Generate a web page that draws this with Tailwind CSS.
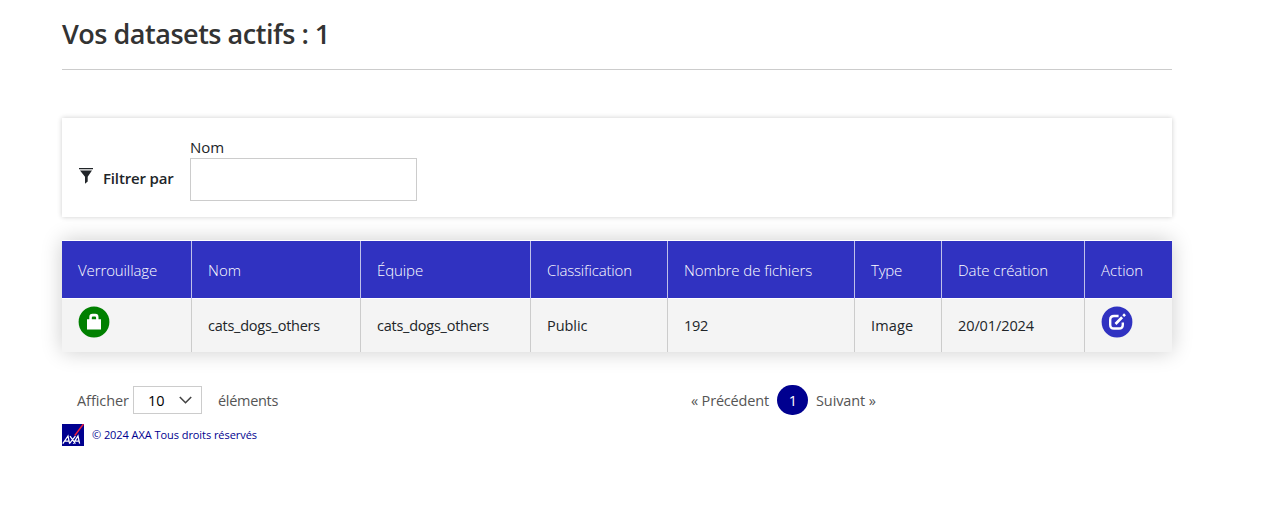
<!DOCTYPE html>
<html lang="fr">
<head>
<meta charset="utf-8">
<title>Vos datasets actifs</title>
<script src="https://cdn.jsdelivr.net/npm/@tailwindcss/browser@4"></script>
</head>
<body class="bg-white font-['Open_Sans',sans-serif] text-[15px] leading-6 text-[#212529]">
<main class="ml-[62px] flex w-[1110px] flex-col whitespace-nowrap">
  <h1 class="h-[70px] border-b border-[#ccc] pt-4 text-[27px] leading-[36px] font-semibold tracking-[-0.48px] text-[#333]">Vos datasets actifs : 1</h1>

  <section class="mt-12 flex h-[99px] bg-white px-4 pt-[18px] shadow-[0_0_5px_rgba(0,0,0,0.2)]">
    <div class="flex w-28 pt-[30px]">
      <svg class="mt-[2px] mr-[10px] ml-px h-4 w-[14px]" viewBox="0 0 14 16" fill="#212529"><path d="M0 0h14v1.2H0zM1 2.6h12L8.7 8.8v4.7L6 15.8V8.8z"/></svg>
      <span class="font-semibold tracking-[-0.16px]">Filtrer par</span>
    </div>
    <div class="flex flex-col">
      <label for="nom" class="h-[22px] leading-[23px]">Nom</label>
      <input id="nom" type="text" class="h-[43px] w-[227px] border border-[#ccc] bg-white px-3 outline-none">
    </div>
  </section>

  <section class="mt-[23px] h-[112px] bg-[#f4f4f4] shadow-[0_0_20px_rgba(0,0,0,0.2)]">
    <div class="grid h-[59px] grid-cols-[130px_169px_170px_137px_187px_87px_143px_87px] border-y border-white bg-[#3032c1] leading-[59px] font-light text-white">
      <div class="border-r border-[#bfc0ea] pl-4 tracking-[-0.11px]">Verrouillage</div>
      <div class="border-r border-[#bfc0ea] pl-4 tracking-[0.1px]">Nom</div>
      <div class="border-r border-[#bfc0ea] pl-4 tracking-[-0.1px]">Équipe</div>
      <div class="border-r border-[#bfc0ea] pl-4 tracking-[-0.15px]">Classification</div>
      <div class="border-r border-[#bfc0ea] pl-4 tracking-[-0.06px]">Nombre de fichiers</div>
      <div class="border-r border-[#bfc0ea] pl-4 tracking-[-0.2px]">Type</div>
      <div class="border-r border-[#bfc0ea] pl-4 tracking-[-0.07px]">Date création</div>
      <div class="pl-4">Action</div>
    </div>
    <div class="grid h-[52px] grid-cols-[130px_169px_170px_137px_187px_87px_143px_87px] text-[14.5px] leading-[53px] tracking-[-0.25px]">
      <div class="border-r border-[#ccc] pt-[7px] pl-4">
        <svg class="size-8" viewBox="0 0 32 32"><circle cx="16" cy="16" r="15.4" fill="#008000"/><path d="M9 13.2h2.3V11q0-3.2 3.2-3.2h2.8q3.2 0 3.2 3.2v2.2H23V23.5H9zM13.8 13.2h4.3v-1.5q0-1.1-1.1-1.1h-2.1q-1.1 0-1.1 1.1z" fill="#fff" fill-rule="evenodd"/></svg>
      </div>
      <div class="border-r border-[#ccc] pl-4">cats_dogs_others</div>
      <div class="border-r border-[#ccc] pl-4">cats_dogs_others</div>
      <div class="border-r border-[#ccc] pl-4 tracking-[-0.05px]">Public</div>
      <div class="border-r border-[#ccc] pl-4">192</div>
      <div class="border-r border-[#ccc] pl-4 tracking-[0.15px]">Image</div>
      <div class="border-r border-[#ccc] pl-4 tracking-[-0.1px]">20/01/2024</div>
      <div class="pt-[7px] pl-4">
        <svg class="size-8" viewBox="0 0 32 32" fill="none" stroke="#fff"><circle cx="16" cy="16" r="15.4" fill="#3032c1" stroke="none"/><path d="M17.6 10h-4.6q-3.8 0-3.8 3.8v4.9q0 3.8 3.8 3.8h5q3.8 0 3.8-3.8V16.5" stroke-width="2.4"/><path d="M14.5 18l6.6-6.7M22.2 10.1l1.8-1.8" stroke-width="2.7"/></svg>
      </div>
    </div>
  </section>

  <div class="mt-8 flex h-[31px] items-center text-[14.5px] text-[#555]">
    <span class="ml-[15px] w-14 pt-[3px] tracking-[-0.08px]">Afficher</span>
    <div class="flex h-[28px] w-[69px] items-center justify-between border border-[#ccc] bg-white pr-[9px] pl-[14px] text-black">
      <span class="pt-[2px]">10</span>
      <svg class="h-2 w-[13px]" viewBox="0 0 13 8" fill="none" stroke="#444" stroke-width="1.6"><path d="M.8 1l5.7 5.7L12.2 1"/></svg>
    </div>
    <span class="ml-4 w-[473px] pt-[3px] tracking-[-0.3px]">éléments</span>
    <span class="w-[86px] pt-[3px] tracking-[-0.18px]">« Précédent</span>
    <span class="mr-2 flex h-[30px] w-[31px] items-center justify-center rounded-full bg-[#00008f] pt-[3px] pl-px text-white">1</span>
    <span class="pt-[3px] tracking-[-0.1px]">Suivant »</span>
  </div>

  <footer class="mt-[9px] flex h-[22px] items-center text-[11px] font-medium tracking-[-0.06px] text-[#00008f]">
    <svg class="mr-2 size-[22px]" viewBox="0 0 22 22" fill="none"><path fill="#00008f" d="M0 0h22v22H0z"/><path d="M12.8 11.5L21.5 0" stroke="#f0213c" stroke-width="1.5"/><path d="M.8 19.6L6 12l1.6 7.6M2.8 17.2h4.4M8 12.2l5.4 7.4M13.4 12.2L7.4 19.6M11.2 19.6L16 12l1.6 7.6M12.8 17.2h4.2" stroke="#fff" stroke-width="1.25"/></svg>
    <span>© 2024 AXA Tous droits réservés</span>
  </footer>
</main>
</body>
</html>
